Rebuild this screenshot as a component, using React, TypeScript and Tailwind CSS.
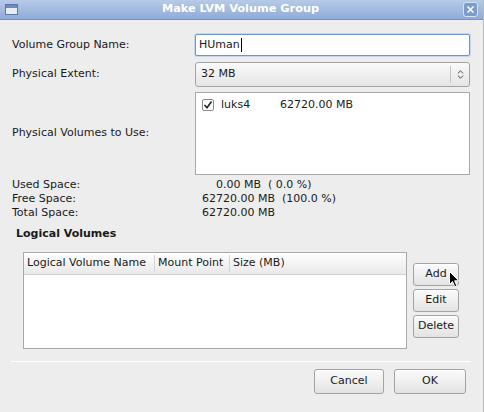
import { ChevronsUpDown } from "lucide-react";

function GtkButton({ label, className }: { label: string; className?: string }) {
    return (
        <div
            className={
                "flex items-center justify-center rounded-[3px] border border-[#a3a3a3] bg-gradient-to-b from-[#fbfbfb] to-[#e3e3e3] text-[11px] text-[#1a1a1a] shadow-[inset_0_1px_0_#ffffff] " +
                (className ?? "")
            }
        >
            {label}
        </div>
    );
}

function Cursor() {
    return (
        <svg className="absolute left-[449px] top-[271px]" width="11" height="17" viewBox="0 0 11 17">
            <path d="M0.5 0.5 L0.5 13.5 L3.5 10.5 L5.8 15.8 L7.8 14.9 L5.6 9.8 L9.8 9.8 Z" fill="#000" stroke="#fff" strokeWidth="1" />
        </svg>
    );
}

export default function App() {
    const font = { fontFamily: '"DejaVu Sans", sans-serif' };

    return (
        <div className="relative w-[484px] h-[412px] bg-[#ededed] flex flex-col overflow-hidden border-r border-[#b8b8b8]" style={font}>
            {/* Title bar */}
            <div className="h-[20px] shrink-0 flex items-center px-[5px] bg-gradient-to-b from-[#b7cbe8] to-[#8fabd8] border-b border-[#7893c2]">
                <div className="w-[13px] h-[11px] border border-[#5a78a8] bg-[#e8ecef] flex flex-col">
                    <div className="h-[3px] bg-[#6a8cc2]" />
                </div>
                <div className="flex-1 text-center text-[11.3px] font-bold text-white">Make LVM Volume Group</div>
                <div className="w-[15px] h-[15px] rounded-[3px] border border-[#d6e1f2] bg-[#7d9bcc] flex items-center justify-center">
                    <svg width="9" height="9" viewBox="0 0 9 9">
                        <path d="M1.5 1.5 L7.5 7.5 M7.5 1.5 L1.5 7.5" stroke="#fff" strokeWidth="1.6" />
                    </svg>
                </div>
            </div>

            {/* Form */}
            <div className="flex flex-col pl-[12px] pr-[13px] pt-[14px] text-[11px] text-[#1a1a1a]">
                <div className="grid grid-cols-[183px_1fr] items-center">
                    <span>Volume Group Name:</span>
                    <div className="h-[22px] rounded-[2px] border border-[#6f95cf] bg-white shadow-[0_0_0_1px_#c6d6ee] flex items-center pl-[3px]">
                        HUman<span className="w-px h-[14px] bg-black ml-px" />
                    </div>
                </div>
                <div className="grid grid-cols-[183px_1fr] items-center mt-[6px]">
                    <span>Physical Extent:</span>
                    <div className="h-[25px] rounded-[3px] border border-[#a3a3a3] bg-gradient-to-b from-[#fafafa] to-[#e5e5e5] flex items-center">
                        <span className="flex-1 pl-[5px]">32 MB</span>
                        <div className="h-[17px] w-px bg-[#c4c4c4]" />
                        <div className="w-[18px] flex justify-center">
                            <ChevronsUpDown size={11} strokeWidth={2} color="#333" />
                        </div>
                    </div>
                </div>
                <div className="grid grid-cols-[183px_1fr] items-center mt-[5px]">
                    <span>Physical Volumes to Use:</span>
                    <div className="h-[83px] border border-[#a9a9a9] bg-white pt-[4px] pl-[6px]">
                        <div className="flex items-center">
                            <div className="w-[12px] h-[12px] border border-[#8a8a8a] rounded-[2px] bg-white flex items-center justify-center">
                                <svg width="10" height="10" viewBox="0 0 10 10">
                                    <path d="M1.5 5 L4 7.8 L8.5 1.5" fill="none" stroke="#222" strokeWidth="1.6" />
                                </svg>
                            </div>
                            <span className="ml-[7px] w-[59px]">luks4</span>
                            <span>62720.00 MB</span>
                        </div>
                    </div>
                </div>

                {/* Space summary */}
                <div className="grid grid-cols-[190px_1fr] mt-[3px] leading-[14px]">
                    <span>Used Space:</span>
                    <span className="whitespace-pre pl-[14px]">{"0.00 MB  ( 0.0 %)"}</span>
                    <span>Free Space:</span>
                    <span className="whitespace-pre">{"62720.00 MB  (100.0 %)"}</span>
                    <span>Total Space:</span>
                    <span className="whitespace-pre">62720.00 MB</span>
                </div>

                <div className="font-bold pl-[4px] mt-[7px] leading-[14px]">Logical Volumes</div>

                {/* Logical volumes table + side buttons */}
                <div className="flex mt-[11px] pl-[11px] gap-[6px]">
                    <div className="w-[384px] h-[97px] border border-[#a9a9a9] bg-white flex flex-col">
                        <div className="h-[22px] flex items-center whitespace-nowrap bg-gradient-to-b from-[#ffffff] to-[#e9e9e9] border-b border-[#d0d0d0]">
                            <span className="pl-[3px] w-[131px] border-r border-[#d4d4d4]">Logical Volume Name</span>
                            <span className="pl-[3px] w-[75px] border-r border-[#d4d4d4]">Mount Point</span>
                            <span className="pl-[3px]">Size (MB)</span>
                        </div>
                    </div>
                    <div className="flex flex-col pt-[11px] gap-[3px]">
                        <GtkButton label="Add" className="w-[46px] h-[23px]" />
                        <GtkButton label="Edit" className="w-[46px] h-[23px]" />
                        <GtkButton label="Delete" className="w-[46px] h-[23px]" />
                    </div>
                </div>

                <div className="h-px bg-[#cfcfcf] border-b border-white mt-[12px] ml-[-1px] mr-[-1px]" />

                <div className="flex justify-end gap-[10px] mt-[7px] pr-[4px]">
                    <GtkButton label="Cancel" className="w-[70px] h-[25px]" />
                    <GtkButton label="OK" className="w-[72px] h-[25px]" />
                </div>
            </div>

            <Cursor />
        </div>
    );
}
